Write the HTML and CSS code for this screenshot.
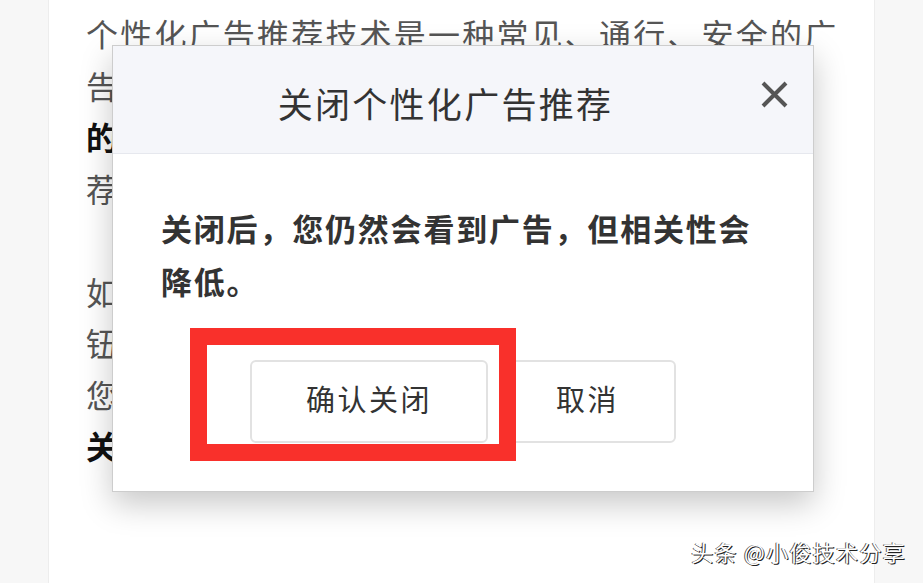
FILE: index.html
```html
<!DOCTYPE html>
<html lang="zh-CN">
  <head>
    <meta charset="UTF-8" />
    <meta name="viewport" content="width=device-width, initial-scale=1.0" />
    <title>关闭个性化广告推荐</title>
    <link rel="stylesheet" href="styles.css">
  </head>
  <body>
    <div class="page">
      <div class="article">
        <p>
          个性化广告推荐技术是一种常见、通行、安全的广<br />
          告技术，可以让您看到更感兴趣<br />
          <b>的广告，而非与您无关的广告。</b><br />
          荐机制已被业内广泛使用。
        </p>
        <p>
          如您不希望看到个性化广告，可以点击下方按<br />
          钮关闭个性化广告推荐功能。<br />
          您仍然会看到广告，但相关性会降低。<br />
          <b>关闭操作仅对当前设备生效。</b>
        </p>
      </div>

      <div class="modal">
        <div class="modal-head">
          <h2 class="modal-title">关闭个性化广告推荐</h2>
          <button class="close" aria-label="关闭">
            <svg width="29" height="29" viewBox="0 0 29 29">
              <path d="M3 3 L26 26 M26 3 L3 26" stroke="#555" stroke-width="4" fill="none" />
            </svg>
          </button>
        </div>
        <div class="modal-body">
          <p class="notice">关闭后，您仍然会看到广告，但相关性会降低。</p>
          <div class="actions">
            <div class="confirm-wrap">
              <button class="btn">确认关闭</button>
              <span class="mark"></span>
            </div>
            <button class="btn btn-cancel">取消</button>
          </div>
        </div>
      </div>

      <div class="watermark">头条 @小俊技术分享</div>
    </div>
  </body>
</html>
```

FILE: styles.css
```css
* {
  margin: 0;
  padding: 0;
  box-sizing: border-box;
  font-family: "Noto Sans CJK SC", "Noto Sans", sans-serif;
}
body {
  background: #f7f7f7;
  overflow: hidden;
}
.page {
  position: relative;
  height: 583px;
}
.article {
  width: 827px;
  height: 583px;
  margin-left: 48px;
  background: #fff;
  border-left: 1px solid #ededed;
  border-right: 1px solid #ededed;
  padding: 8px 30px 0 37px;
  font-size: 32px;
  letter-spacing: 2.2px;
  line-height: 51.5px;
  color: #555;
  white-space: nowrap;
}
.article p {
  margin-bottom: 51.5px;
}
.article b {
  color: #111;
  font-weight: 700;
}

.modal {
  position: absolute;
  left: 112px;
  top: 45px;
  width: 702px;
  background: #fff;
  border: 1px solid #cdcdcd;
  box-shadow: 0 12px 30px rgba(0, 0, 0, 0.22);
}
.modal-head {
  display: flex;
  align-items: flex-start;
  height: 108px;
  padding: 34px 24px 0 0;
  background: #f5f6fa;
  border-bottom: 1px solid #e6e8ee;
}
.modal-title {
  flex: 1;
  padding-left: 18px;
  text-align: center;
  font-size: 35px;
  font-weight: 400;
  letter-spacing: 2.3px;
  line-height: 46px;
  color: #333;
}
.close {
  border: 0;
  background: none;
  width: 29px;
  height: 29px;
  cursor: pointer;
  filter: blur(0.4px);
}
.close svg {
  display: block;
}
.modal-body {
  padding: 47px 48px 48px;
}
.notice {
  font-size: 31px;
  font-weight: 700;
  letter-spacing: 1.8px;
  line-height: 53px;
  color: #333;
}
.actions {
  display: flex;
  justify-content: center;
  gap: 11px;
  margin-top: 53px;
}
.confirm-wrap {
  position: relative;
}
.btn {
  display: flex;
  align-items: center;
  height: 83px;
  padding: 0 54px 7px;
  background: #fff;
  border: 2px solid #e2e2e2;
  border-radius: 6px;
  font-size: 29px;
  letter-spacing: 2.5px;
  color: #333;
  cursor: pointer;
}
.btn-cancel {
  padding: 0 55px 7px;
}
/* red annotation box drawn over the confirm button */
.mark {
  position: absolute;
  left: -60px;
  top: -32px;
  right: -28px;
  bottom: -18px;
  border: 17px solid #f9302b;
  pointer-events: none;
}

.watermark {
  position: absolute;
  right: 17px;
  bottom: 16px;
  font-size: 22px;
  letter-spacing: 1.3px;
  color: #fff;
  text-shadow: 1px 1px 0 #222, -1px 0 0 #555;
}
```
